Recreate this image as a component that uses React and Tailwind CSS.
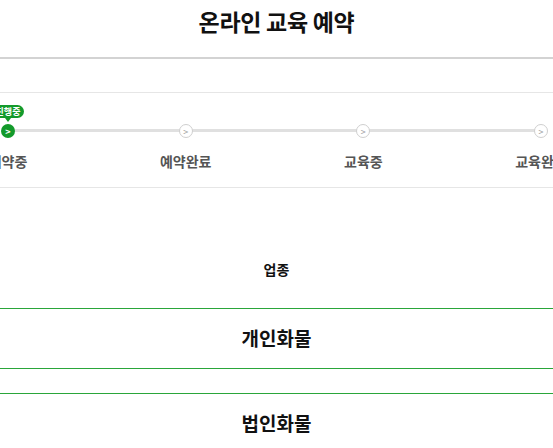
const steps = [
    { label: '예약중', active: true },
    { label: '예약완료' },
    { label: '교육중' },
    { label: '교육완료' },
];

const kinds = ['개인화물', '법인화물'];

function Step({ label, active }) {
    return (
        <div className="flex w-[14px] flex-col items-center">
            <div className="flex h-[19px] flex-col items-center">
                {active && (
                    <>
                        <div className="whitespace-nowrap rounded-full bg-[#139a2b] px-[4px] text-[9px] leading-[13px] font-bold text-white">
                            진행중
                        </div>
                        <div className="h-0 w-0 border-x-[3px] border-t-[4px] border-x-transparent border-t-[#139a2b]" />
                    </>
                )}
            </div>
            <div
                className={
                    active
                        ? 'relative z-10 flex h-[14px] w-[14px] items-center justify-center rounded-full bg-[#139a2b] text-[9px] leading-none font-bold text-white'
                        : 'relative z-10 flex h-[14px] w-[14px] items-center justify-center rounded-full border border-[#cfcfcf] bg-white text-[9px] leading-none text-[#9a9a9a]'
                }
            >
                &gt;
            </div>
            <div className="mt-[13px] whitespace-nowrap text-[14px] leading-[20px] font-semibold text-[#555]">
                {label}
            </div>
        </div>
    );
}

export default function App() {
    return (
        <div className="w-[553px] h-[448px] overflow-hidden bg-white font-['Noto_Sans_CJK_KR','Noto_Sans',sans-serif] text-[#111]">
            {/* header */}
            <div className="flex h-[59px] justify-center border-b-2 border-[#d3d3d3] pt-[6px]">
                <h1 className="text-[23px] leading-[30px] font-bold tracking-[-0.3px]">온라인 교육 예약</h1>
            </div>

            <div className="h-[33px]" />

            {/* steps */}
            <div className="border-y border-[#e6e6e6] pt-[12px] pb-[16px]">
                <div className="relative flex justify-between pl-[1px] pr-[5px]">
                    <div className="absolute left-[8px] right-[12px] top-[24px] h-[3px] bg-[#e0e0e0]" />
                    {steps.map((s) => (
                        <Step key={s.label} {...s} />
                    ))}
                </div>
            </div>

            {/* 업종 */}
            <div className="mt-[71px] text-center text-[14px] leading-[20px] font-bold">업종</div>

            <div className="mt-[29px] flex flex-col gap-[24px]">
                {kinds.map((k) => (
                    <div key={k} className="flex flex-col">
                        <div className="h-px bg-[#2aa63a]" />
                        <div className="flex h-[59px] items-center justify-center text-[19px] font-semibold">{k}</div>
                        <div className="h-px bg-[#2aa63a]" />
                    </div>
                ))}
            </div>
        </div>
    );
}
